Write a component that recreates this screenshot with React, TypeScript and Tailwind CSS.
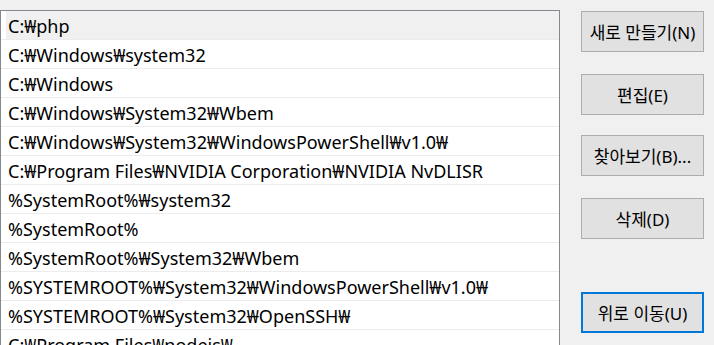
const paths = [
  'C:₩php',
  'C:₩Windows₩system32',
  'C:₩Windows',
  'C:₩Windows₩System32₩Wbem',
  'C:₩Windows₩System32₩WindowsPowerShell₩v1.0₩',
  'C:₩Program Files₩NVIDIA Corporation₩NVIDIA NvDLISR',
  '%SystemRoot%₩system32',
  '%SystemRoot%',
  '%SystemRoot%₩System32₩Wbem',
  '%SYSTEMROOT%₩System32₩WindowsPowerShell₩v1.0₩',
  '%SYSTEMROOT%₩System32₩OpenSSH₩',
  'C:₩Program Files₩nodejs₩',
];

const font = { fontFamily: '"Noto Sans", "Noto Sans CJK KR", sans-serif' };

const Button = ({ label, focused, className }: { label: string; focused?: boolean; className?: string }) => (
  <button
    className={
      'h-[41px] w-[123px] bg-[#e1e1e1] text-[17px] leading-none pt-[2px] text-black flex items-center justify-center whitespace-nowrap ' +
      (focused ? 'border-2 border-[#0078d7] ' : 'border border-[#adadad] ') +
      (className ?? '')
    }
  >
    {label}
  </button>
);

export default function App() {
  return (
    <div className="w-[714px] h-[345px] overflow-hidden bg-[#f0f0f0] flex" style={font}>
      <div className="mt-[10px] w-[560px] h-[400px] shrink-0 bg-white border border-[#828790]">
        {paths.map((p, i) => (
          <div key={p} className="h-[29px] border-b border-[#ececec] flex">
            <div
              className={
                'flex-1 flex items-center pl-[2px] pt-[1px] text-[18px] leading-none text-black whitespace-nowrap ml-[5px] ' +
                (i === 0 ? 'bg-[#f0f0f0]' : '')
              }
            >
              {p}
            </div>
          </div>
        ))}
      </div>
      <div className="ml-[21px] mt-[11px] flex flex-col">
        <Button label="새로 만들기(N)" />
        <Button label="편집(E)" className="mt-[22px]" />
        <Button label="찾아보기(B)..." className="mt-[20px]" />
        <Button label="삭제(D)" className="mt-[22px]" />
        <Button label="위로 이동(U)" focused className="mt-[53px]" />
      </div>
    </div>
  );
}
